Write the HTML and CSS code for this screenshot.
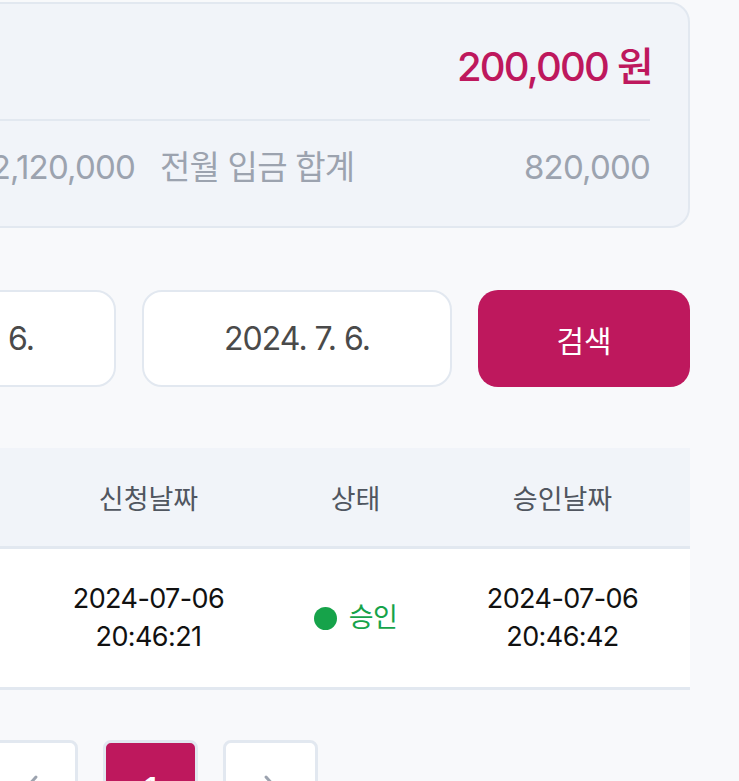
FILE: index.html
```html
<!DOCTYPE html>
<html>
	<head>
		<meta charset="UTF-8">
		<title>입금 내역</title>
		<link rel="stylesheet" href="styles.css">
	</head>
	<body>
		<div class="page">
			<div class="summary">
				<div class="summary-top">
					<span class="summary-label">이번달 입금 합계</span>
					<span class="summary-total">200,000 원</span>
				</div>
				<div class="summary-bottom">
					<div class="sub-group">
						<span>누적 입금 합계</span>
						<span>2,120,000</span>
					</div>
					<div class="sub-group sub-right">
						<span>전월 입금 합계</span>
						<span>820,000</span>
					</div>
				</div>
			</div>

			<div class="search">
				<div class="date-box">2024. 7. 6.</div>
				<div class="date-box">2024. 7. 6.</div>
				<button class="search-btn">검색</button>
			</div>

			<div class="table">
				<div class="row head">
					<div>신청금액</div>
					<div>신청날짜</div>
					<div>상태</div>
					<div>승인날짜</div>
				</div>
				<div class="row body">
					<div>200,000</div>
					<div>2024-07-06<br>20:46:21</div>
					<div class="status"><span class="dot"></span>승인</div>
					<div>2024-07-06<br>20:46:42</div>
				</div>
			</div>

			<div class="paging">
				<button class="page-btn">
					<svg width="16" height="28" viewBox="0 0 16 28"><path d="M13 3 L3 14 L13 25" fill="none" stroke="#9ca3af" stroke-width="3" stroke-linecap="round" stroke-linejoin="round"/></svg>
				</button>
				<button class="page-btn active">1</button>
				<button class="page-btn">
					<svg width="16" height="28" viewBox="0 0 16 28"><path d="M3 3 L13 14 L3 25" fill="none" stroke="#9ca3af" stroke-width="3" stroke-linecap="round" stroke-linejoin="round"/></svg>
				</button>
			</div>
		</div>
	</body>
</html>
```

FILE: styles.css
```css
html, body{
	margin: 0;
	padding: 0;
	overflow: hidden;
	background: #f8f9fb;
	font-family: "Inter", "Noto Sans CJK KR", sans-serif;
}
.page{
	width: 1000px;
	margin-left: -310px;
	padding-top: 2px;
}
.summary{
	background: #f1f4f9;
	border: 2px solid #e2e8f0;
	border-radius: 20px;
	padding: 0 38px;
	height: 226px;
	box-sizing: border-box;
}
.summary-top{
	display: flex;
	justify-content: space-between;
	align-items: flex-end;
	height: 117px;
	box-sizing: border-box;
	padding-bottom: 26px;
	border-bottom: 2px solid #e2e8f0;
}
.summary-label{
	font-size: 32px;
	color: #4b5563;
}
.summary-total{
	font-size: 40px;
	font-weight: 500;
	color: #be185d;
	letter-spacing: -1.8px;
	margin-right: -2px;
}
.summary-bottom{
	display: flex;
	gap: 25px;
	align-items: center;
	height: 103px;
	padding-bottom: 16px;
	box-sizing: border-box;
	font-size: 33px;
	color: #9ca3af;
	letter-spacing: -0.8px;
}
.sub-group{
	flex: 1;
	display: flex;
	justify-content: space-between;
	align-items: baseline;
}
.sub-right{
	flex: none;
	width: 490px;
}
.search{
	display: flex;
	justify-content: flex-end;
	gap: 26px;
	margin-top: 62px;
}
.date-box{
	width: 310px;
	height: 97px;
	box-sizing: border-box;
	border: 2px solid #e2e8f0;
	border-radius: 20px;
	background: #fff;
	display: flex;
	align-items: center;
	justify-content: center;
	font-size: 32px;
	color: #4a4a4a;
	letter-spacing: -1px;
}
.search-btn{
	width: 212px;
	height: 97px;
	border: 0;
	border-radius: 20px;
	background: #be185d;
	color: #fff;
	font-family: inherit;
	font-size: 30px;
}
.table{
	margin-top: 61px;
}
.row{
	display: grid;
	grid-template-columns: 1fr 207px 207px 207px;
	padding-right: 24px;
	text-align: center;
	box-sizing: border-box;
	border-bottom: 3px solid #e2e8f0;
}
.row > div{
	display: flex;
	align-items: center;
	justify-content: center;
}
.head{
	background: #f1f4f9;
	height: 101px;
	font-size: 27px;
	color: #505660;
}
.body{
	background: #fff;
	height: 141px;
	font-size: 27px;
	line-height: 38px;
	color: #111;
	letter-spacing: -0.6px;
}
.status{
	color: #16a34a;
	gap: 12px;
}
.dot{
	width: 23px;
	height: 23px;
	border-radius: 50%;
	background: #16a34a;
}
.paging{
	display: flex;
	gap: 25px;
	padding-left: 293px;
	margin-top: 50px;
}
.page-btn{
	width: 95px;
	height: 96px;
	border: 3px solid #e2e8f0;
	border-radius: 8px;
	background: #fff;
	color: #9ca3af;
	font-family: inherit;
	font-size: 30px;
	padding: 0;
	display: flex;
	align-items: center;
	justify-content: center;
}
.page-btn.active{
	background: #be185d;
	color: #fff;
	font-weight: 600;
}
```
